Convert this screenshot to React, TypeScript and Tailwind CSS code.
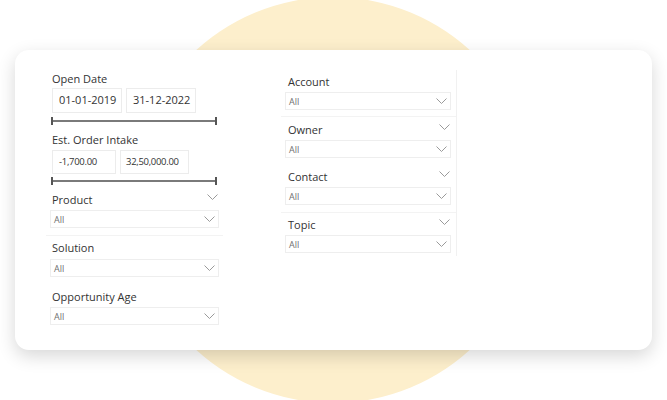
import React from "react";

const font = { fontFamily: "'Open Sans', 'Noto Sans', sans-serif" };

function Chevron({ className = "" }: { className?: string }) {
  return (
    <svg width="11" height="6" viewBox="0 0 11 6" className={className} fill="none">
      <path d="M0.5 0.5 L5.5 5.5 L10.5 0.5" stroke="#9a9a9a" strokeWidth="1" />
    </svg>
  );
}

function Dropdown({ className = "", width }: { className?: string; width: string }) {
  return (
    <div
      className={`flex items-center justify-between h-[18px] border border-[#eeeeee] pl-[3px] pr-[3px] ${width} ${className}`}
    >
      <span className="text-[9px] leading-none text-[#6f6f6f]">All</span>
      <Chevron />
    </div>
  );
}

function Slider() {
  return (
    <div className="mt-[4px] ml-[5px] w-[166px] h-[8px] flex items-center">
      <div className="w-[2px] h-[8px] bg-[#555555]" />
      <div className="flex-1 h-[2px] bg-[#7a7a7a]" />
      <div className="w-[2px] h-[8px] bg-[#555555]" />
    </div>
  );
}

function Box({ text, className }: { text: string; className: string }) {
  return (
    <div className={`flex items-center border border-[#ececec] text-[#333333] ${className}`}>
      {text}
    </div>
  );
}

export default function App() {
  return (
    <div className="relative w-[667px] h-[400px] overflow-hidden bg-white" style={font}>
      <div className="absolute left-[130px] top-[-3px] w-[406px] h-[406px] rounded-full bg-[#fdefcc]" />
      <div className="relative ml-[15px] mt-[50px] w-[637px] h-[300px] rounded-[14px] bg-white shadow-[0_6px_18px_rgba(0,0,0,0.16)] flex items-start pl-[31px]">
        {/* left column */}
        <div className="w-[177px] mt-[22px] flex flex-col">
          <div className="pl-[6px] text-[11px] leading-[14px] text-[#333333]">Open Date</div>
          <div className="mt-[2px] ml-[6px] flex gap-[4px] h-[25px]">
            <Box text="01-01-2019" className="w-[70px] pl-[6px] text-[11px]" />
            <Box text="31-12-2022" className="w-[70px] pl-[6px] text-[11px]" />
          </div>
          <Slider />
          <div className="mt-[8px] pl-[6px] text-[11px] leading-[14px] text-[#333333]">Est. Order Intake</div>
          <div className="mt-[3px] ml-[6px] flex gap-[4px] h-[24px]">
            <Box text="-1,700.00" className="w-[64px] pl-[6px] text-[9.5px] tracking-[-0.3px]" />
            <Box text="32,50,000.00" className="w-[69px] pl-[5px] text-[9.5px] tracking-[-0.3px]" />
          </div>
          <div className="-mt-[1px]">
            <Slider />
          </div>
          <div className="mt-[8px] pl-[6px] pr-[5px] flex items-start justify-between">
            <span className="text-[11px] leading-[14px] text-[#333333]">Product</span>
            <Chevron className="mt-[1px]" />
          </div>
          <Dropdown className="mt-[3px] ml-[4px]" width="w-[169px]" />
          <div className="mt-[7px] h-px bg-[#f3f3f3]" />
          <div className="mt-[5px] pl-[6px] text-[11px] leading-[14px] text-[#333333]">Solution</div>
          <Dropdown className="mt-[4px] ml-[4px]" width="w-[169px]" />
          <div className="mt-[13px] pl-[6px] text-[11px] leading-[14px] text-[#333333]">Opportunity Age</div>
          <Dropdown className="mt-[3px] ml-[4px]" width="w-[169px]" />
        </div>

        {/* right column */}
        <div className="ml-[58px] mt-[20px] w-[176px] border-r border-[#f1f1f1] pt-[5px] pb-[3px] flex flex-col">
          <div className="pl-[7px] text-[11px] leading-[14px] text-[#333333]">Account</div>
          <Dropdown className="mt-[3px] ml-[4px]" width="w-[166px]" />
          <div className="mt-[6px] h-px bg-[#f3f3f3]" />
          <div className="mt-[6px] pl-[7px] pr-[6px] flex items-start justify-between">
            <span className="text-[11px] leading-[14px] text-[#333333]">Owner</span>
            <Chevron className="mt-[1px]" />
          </div>
          <Dropdown className="mt-[3px] ml-[4px]" width="w-[166px]" />
          <div className="mt-[12px] pl-[7px] pr-[6px] flex items-start justify-between">
            <span className="text-[11px] leading-[14px] text-[#333333]">Contact</span>
            <Chevron className="mt-[1px]" />
          </div>
          <Dropdown className="mt-[3px] ml-[4px]" width="w-[166px]" />
          <div className="mt-[7px] h-px bg-[#f3f3f3]" />
          <div className="mt-[5px] pl-[7px] pr-[6px] flex items-start justify-between">
            <span className="text-[11px] leading-[14px] text-[#333333]">Topic</span>
            <Chevron className="mt-[1px]" />
          </div>
          <Dropdown className="mt-[3px] ml-[4px]" width="w-[166px]" />
        </div>
      </div>
    </div>
  );
}
